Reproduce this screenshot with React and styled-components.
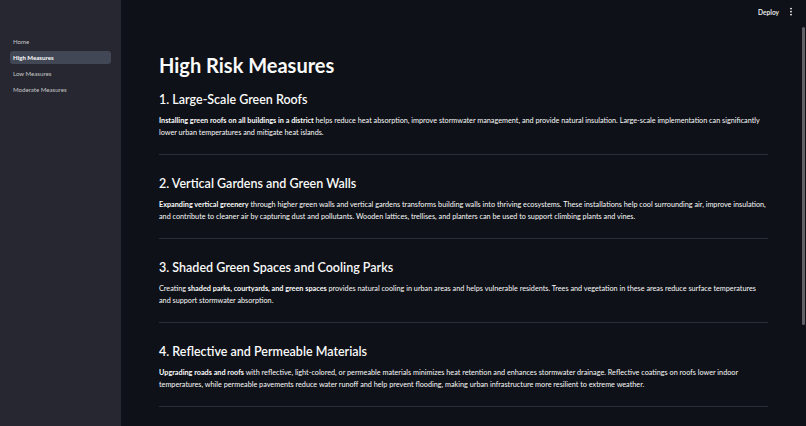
import React from 'react';
import styled, { createGlobalStyle } from 'styled-components';

const GlobalStyle = createGlobalStyle`
  html, body {
    margin: 0;
    padding: 0;
    background: #0e1117;
    overflow: hidden;
  }
  body {
    font-family: Lato, "Noto Sans", sans-serif;
    color: #fafafa;
  }
`;

const Shell = styled.div`
  display: flex;
  height: 426px;
`;

const Sidebar = styled.aside`
  width: 121px;
  flex-shrink: 0;
  box-sizing: border-box;
  padding: 35px 10px 0;
  background: #262730;
`;

const NavList = styled.nav`
  display: flex;
  flex-direction: column;
  gap: 3px;
`;

const NavItem = styled.a`
  display: block;
  height: 13px;
  line-height: 13px;
  padding: 0 3px;
  border-radius: 3px;
  font-size: 6.1px;
  text-decoration: none;
  color: ${p => (p.$active ? '#fafafa' : 'rgba(250, 250, 250, 0.75)')};
  font-weight: ${p => (p.$active ? 700 : 400)};
  background: ${p => (p.$active ? 'rgba(151, 166, 195, 0.25)' : 'transparent')};
`;

const Main = styled.main`
  flex: 1;
  position: relative;
  display: flex;
  flex-direction: column;
  overflow: hidden;
`;

const Header = styled.header`
  height: 24px;
  flex-shrink: 0;
  display: flex;
  justify-content: flex-end;
  align-items: center;
  gap: 10px;
  padding-right: 13px;
`;

const DeployButton = styled.button`
  background: none;
  border: none;
  padding: 0;
  color: #fafafa;
  font-family: Lato, "Noto Sans", sans-serif;
  font-size: 6.6px;
  font-weight: 600;
`;

const Content = styled.div`
  width: 609px;
  margin: 0 auto;
  padding-top: 29px;
`;

const Title = styled.h1`
  margin: 0 0 15px;
  font-size: 20px;
  line-height: 24px;
  font-weight: 700;
`;

const Section = styled.section`
  & + & {
    margin-top: 21px;
  }
`;

const Heading = styled.h3`
  margin: 0;
  font-size: 12.5px;
  line-height: 16px;
  font-weight: 600;
`;

const Text = styled.p`
  margin: 7px 0 0;
  font-size: 7.25px;
  line-height: 12px;
  strong {
    font-weight: 700;
  }
`;

const Divider = styled.hr`
  margin: 15px 0 0;
  height: 0;
  border: none;
  border-top: 1px solid #2a2d35;
`;

const ScrollThumb = styled.div`
  position: absolute;
  right: 1px;
  top: 27px;
  width: 3px;
  height: 298px;
  border-radius: 2px;
  background: rgba(250, 250, 250, 0.35);
`;

const MenuIcon = () => (
  <svg width="4" height="10" viewBox="0 0 4 10">
    <circle cx="2" cy="1.6" r="0.9" fill="#fafafa" />
    <circle cx="2" cy="4.6" r="0.9" fill="#fafafa" />
    <circle cx="2" cy="7.6" r="0.9" fill="#fafafa" />
  </svg>
);

const pages = ['Home', 'High Measures', 'Low Measures', 'Moderate Measures'];

const measures = [
  {
    title: '1. Large-Scale Green Roofs',
    lead: '',
    bold: 'Installing green roofs on all buildings in a district',
    rest: ' helps reduce heat absorption, improve stormwater management, and provide natural insulation. Large-scale implementation can significantly lower urban temperatures and mitigate heat islands.',
  },
  {
    title: '2. Vertical Gardens and Green Walls',
    lead: '',
    bold: 'Expanding vertical greenery',
    rest: ' through higher green walls and vertical gardens transforms building walls into thriving ecosystems. These installations help cool surrounding air, improve insulation, and contribute to cleaner air by capturing dust and pollutants. Wooden lattices, trellises, and planters can be used to support climbing plants and vines.',
  },
  {
    title: '3. Shaded Green Spaces and Cooling Parks',
    lead: 'Creating ',
    bold: 'shaded parks, courtyards, and green spaces',
    rest: ' provides natural cooling in urban areas and helps vulnerable residents. Trees and vegetation in these areas reduce surface temperatures and support stormwater absorption.',
  },
  {
    title: '4. Reflective and Permeable Materials',
    lead: '',
    bold: 'Upgrading roads and roofs',
    rest: ' with reflective, light-colored, or permeable materials minimizes heat retention and enhances stormwater drainage. Reflective coatings on roofs lower indoor temperatures, while permeable pavements reduce water runoff and help prevent flooding, making urban infrastructure more resilient to extreme weather.',
  },
];

const App = () => {
  return (
    <>
      <GlobalStyle />
      <Shell>
        <Sidebar>
          <NavList>
            {pages.map(page => (
              <NavItem key={page} $active={page === 'High Measures'}>{page}</NavItem>
            ))}
          </NavList>
        </Sidebar>
        <Main>
          <Header>
            <DeployButton>Deploy</DeployButton>
            <MenuIcon />
          </Header>
          <Content>
            <Title>High Risk Measures</Title>
            {measures.map(m => (
              <Section key={m.title}>
                <Heading>{m.title}</Heading>
                <Text>
                  {m.lead}<strong>{m.bold}</strong>{m.rest}
                </Text>
                <Divider />
              </Section>
            ))}
          </Content>
          <ScrollThumb />
        </Main>
      </Shell>
    </>
  );
};

export default App;
